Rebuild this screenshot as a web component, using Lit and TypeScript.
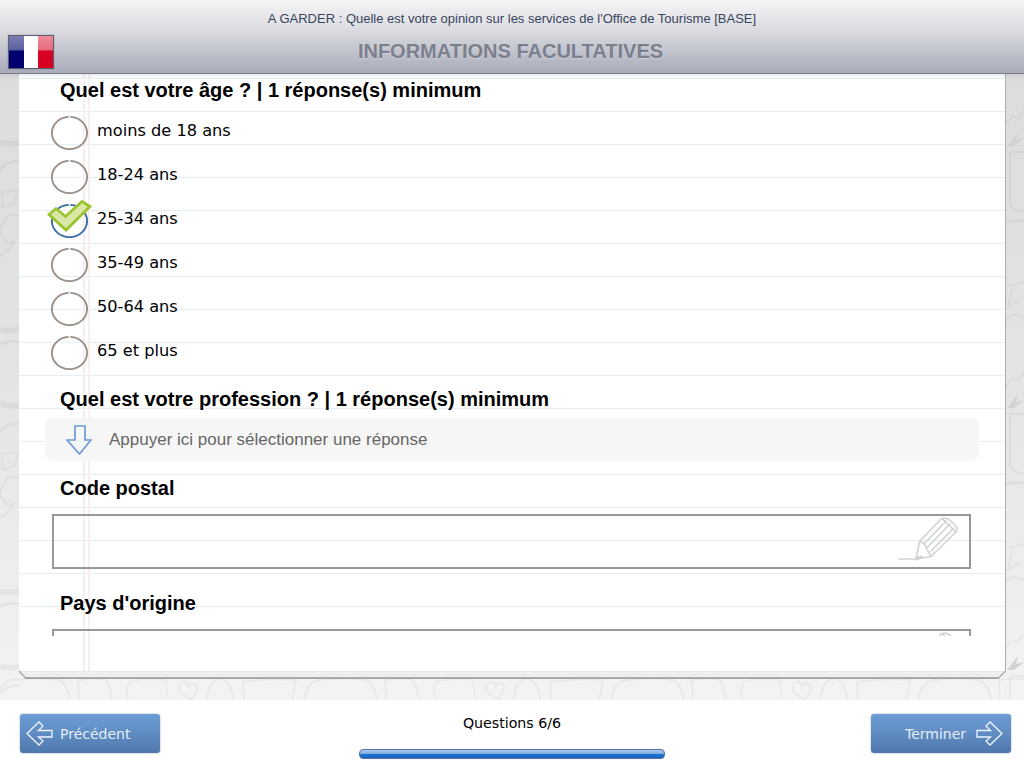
import { LitElement, html, css, svg } from "lit";
import { customElement } from "lit/decorators.js";

const OPTIONS = ["moins de 18 ans", "18-24 ans", "25-34 ans", "35-49 ans", "50-64 ans", "65 et plus"];
const CHECKED = 2;

const pencil = html`<svg class="pencil" width="62" height="46" viewBox="0 0 62 46" fill="none" stroke="#d2d2d2" stroke-width="1.600" stroke-linejoin="round" stroke-linecap="round">
  <path d="M1 42H17" />
  <path d="M18 42L21.500 24.500L42.500 2.500Q47 0 51 2.500L57.500 8.500Q60.500 12 58 15L33 39.500Z" />
  <path d="M21.500 24.500Q28 26 28.500 32Q31 35 33 39.500" />
  <path d="M18 42L23 40" stroke-width="3" />
  <path d="M26 27L48 4M29.500 30L52 7M33 34L56 11" />
  <path d="M44 1.500L58 15" />
</svg>`;

const bottomTile = (x: number) => svg`<g transform="translate(${x} 0)">
  <path d="M-3 626Q0 608 12 606Q40 603 60 606Q68 612 70 626" />
  <path d="M79 626L78 606Q95 603 106 606Q110 612 112 626" />
  <path d="M128 626Q125 612 131 607Q150 604 166 606L168 626" stroke-dasharray="3 1" />
  <path d="M180 618Q176 610 184 608Q188 608 188 612Q194 606 197 612Q197 620 190 626M180 618L190 626" />
  <path d="M207 626Q208 606 220 604Q232 608 233 626" />
  <path d="M242 608Q270 604 296 606L292 626M243 608L244 626" />
</g>`;

const leftBlock = (y: number) => svg`<g transform="translate(0 ${y})">
  <path d="M0 68Q10 71 19 69" stroke-width="6" />
  <path d="M19 87Q5 88 0 96" stroke-width="2.500" />
  <path d="M2 118L18 116L15 130L2 134Z" stroke-width="1.500" />
  <path d="M19 142Q6 138 4 148Q-4 158 4 164Q6 172 14 168Q10 176 0 182" stroke-width="2" />
  <path d="M0 256Q10 258 19 255" stroke-width="6" />
  <path d="M0 270Q10 266 19 268" stroke-width="3" />
</g>`;

const rightBlock = (y: number) => svg`<g transform="translate(0 ${y})">
  <path d="M1006 50L1012 42L1018 44L1024 36" />
  <path d="M1007 72L1018 58L1016 66L1024 64L1014 72Z" fill="#d2d2d2" stroke="none" />
  <path d="M1010 78H1024M1010 78V130Q1012 136 1024 138" stroke-width="2" />
  <path d="M1006 148Q1016 146 1024 147" stroke-width="3" />
  <path d="M1008 212L1024 208M1012 214L1008 234L1020 226" />
  <path d="M1006 246L1012 240L1024 244" />
</g>`;

@customElement("app-root")
export class AppRoot extends LitElement {
  static styles = css`
    :host {
      display: block;
      width: 1024px;
      height: 768px;
      overflow: hidden;
      background: #fff;
      font-family: "Liberation Sans", Arial, sans-serif;
    }
    .page {
      display: flex;
      flex-direction: column;
      height: 768px;
    }
    header {
      position: relative;
      z-index: 2;
      box-sizing: border-box;
      height: 74px;
      padding-top: 11px;
      text-align: center;
      background: linear-gradient(to bottom, #f5f5f7 0%, #dfe0e4 35%, #a8acba 100%);
      border-bottom: 1px solid #787b88;
      box-shadow: 0 2px 3px rgba(120, 125, 135, 0.18);
    }
    .survey {
      font-size: 13px;
      line-height: 16px;
      color: #39445f;
    }
    .section {
      margin-top: 13px;
      padding-right: 3px;
      font-size: 20px;
      line-height: 22px;
      font-weight: bold;
      color: #7b7f8e;
      text-shadow: 0 1px 1px rgba(255, 255, 255, 0.3);
    }
    .flag {
      position: absolute;
      left: 8px;
      top: 35px;
      box-sizing: border-box;
      width: 46px;
      height: 34px;
      display: flex;
      border: 1px solid #5c5f72;
      box-shadow: 0 0 1px rgba(0, 0, 0, 0.4);
    }
    .flag i {
      flex: 1;
      display: block;
    }
    .flag .b {
      background: linear-gradient(to bottom, #7c7fb4 0%, #5c5f9f 42%, #00006e 48%, #000070 100%);
    }
    .flag .w {
      background: #fff;
    }
    .flag .r {
      background: linear-gradient(to bottom, #ef8b98 0%, #e66d7d 42%, #d80027 48%, #d4001f 100%);
    }
    main {
      position: relative;
      flex: 1;
      overflow: hidden;
      padding-left: 19px;
      background: linear-gradient(to bottom, #dcdcdc 0%, #e4e4e4 50%, #f3f3f3 100%);
    }
    .doodles {
      position: absolute;
      inset: 0;
    }
    .corners {
      position: absolute;
      left: 0;
      top: 0;
    }
    .paper {
      position: relative;
      box-sizing: border-box;
      display: flex;
      flex-direction: column;
      width: 987px;
      height: 605px;
      border-right: 1px solid #adadad;
      border-bottom: 2px solid #a8a8a8;
      clip-path: polygon(0 0, 100% 0, 100% calc(100% - 8px), calc(100% - 8px) 100%, 7px 100%, 0 calc(100% - 8px));
      background-color: #fff;
      background-image:
        linear-gradient(to right, transparent 64px, #f6eef1 64px, #f6eef1 66px, transparent 66px, transparent 69px, #f6eef1 69px, #f6eef1 71px, transparent 71px),
        linear-gradient(to bottom, transparent 545px, #fff 560px),
        linear-gradient(#e2eff7 1px, transparent 1px);
      background-size: 100% 100%, 100% 100%, 100% 33px;
      background-position: 0 0, 0 0, 0 4px;
    }
    .content {
      height: 562px;
      overflow: hidden;
      box-sizing: border-box;
      padding-top: 5px;
    }
    h2 {
      margin: 0 0 0 41px;
      font-size: 20px;
      line-height: 22px;
      font-weight: bold;
      color: #000;
    }
    .options {
      margin-top: 7px;
      margin-bottom: 16px;
    }
    .option {
      display: flex;
      height: 44px;
      padding-left: 32px;
    }
    .radio {
      position: relative;
      width: 37px;
      height: 34px;
      margin-top: 8px;
      margin-right: 9px;
    }
    .radio svg {
      display: block;
    }
    .radio .check {
      position: absolute;
      left: -5px;
      top: -4px;
    }
    .option span {
      font-family: "DejaVu Sans", Verdana, sans-serif;
      font-size: 16.2px;
      line-height: 46px;
      color: #000;
    }
    .select {
      display: flex;
      align-items: center;
      box-sizing: border-box;
      height: 43px;
      margin: 8px 26px 16px 26px;
      padding-left: 21px;
      border-radius: 8px;
      background: #f6f6f6;
      font-size: 17px;
      color: #666;
    }
    .select svg {
      margin-right: 17px;
      flex: none;
    }
    .field {
      position: relative;
      box-sizing: border-box;
      height: 55px;
      margin: 15px 34px 23px 33px;
      border: 2px solid #989898;
    }
    .pencil {
      position: absolute;
      right: 9px;
      top: 1px;
    }
    .stack {
      margin-top: auto;
      height: 6px;
      box-sizing: border-box;
      background: linear-gradient(to bottom, #f2f2f2, #ececec 70%, #f7f7f7);
      border-top: 1px solid #e8e8e8;
    }
    footer {
      box-sizing: border-box;
      height: 68px;
      display: grid;
      grid-template-columns: 339px 306px 1fr;
      padding: 14px 13px 0 20px;
      background: #fff;
    }
    .btn {
      box-sizing: border-box;
      width: 140px;
      height: 39px;
      display: flex;
      align-items: center;
      border-radius: 3px;
      background: linear-gradient(to bottom, #6c9cd5 0%, #5f8cc3 50%, #4f78ac 100%);
      box-shadow: 0 0 2px rgba(60, 90, 130, 0.55);
      font-family: "DejaVu Sans", Verdana, sans-serif;
      font-size: 14px;
      color: #e4edf8;
    }
    .prev {
      padding-left: 6px;
      gap: 7px;
    }
    .next {
      justify-self: end;
      padding-left: 34px;
      gap: 10px;
    }
    .progress-area {
      display: flex;
      flex-direction: column;
      align-items: center;
    }
    .count {
      font-family: "DejaVu Sans", Verdana, sans-serif;
      font-size: 14.2px;
      line-height: 18px;
      color: #000;
    }
    .bar {
      box-sizing: border-box;
      width: 306px;
      height: 10px;
      margin-top: 17px;
      border-radius: 4px;
      border: 1px solid #5a6fa8;
      background: linear-gradient(to bottom, #a9c8ec 0%, #7fa9dc 50%, #1c6fd3 55%, #1a66c2 100%);
    }
  `;

  private ring(blue: boolean) {
    return html`<svg width="37" height="34" viewBox="0 0 37 34" fill="none">
      <ellipse cx="18.500" cy="17" rx="17.600" ry="16.100" stroke=${blue ? "#3a6fa9" : "#9b9087"} stroke-width="1.900"
        pathLength="100" stroke-dasharray="74.200 1.600 24.200" />
    </svg>`;
  }

  private check() {
    return html`<svg class="check" width="46" height="33" viewBox="0 0 46 33">
      <polygon points="3,14.500 10,8.500 19.500,16.500 36,1.500 44,6.500 20,30" fill="#d9e8a6" stroke="#9cc42e" stroke-width="2.800" stroke-linejoin="miter" />
    </svg>`;
  }

  private arrow(right: boolean) {
    return html`<svg width="27" height="25" viewBox="0 0 27 25" fill="none" stroke="#eef4fb" stroke-width="1.300" stroke-linejoin="miter"
      style=${right ? "transform:scaleX(-1)" : ""}>
      <path d="M1 12.500L13 1L17 5L12.500 9.500H26V16H12.500L17 20L13 24Z" />
    </svg>`;
  }

  render() {
    return html`<div class="page">
      <header>
        <div class="survey">A GARDER : Quelle est votre opinion sur les services de l'Office de Tourisme [BASE]</div>
        <div class="section">INFORMATIONS FACULTATIVES</div>
        <div class="flag"><i class="b"></i><i class="w"></i><i class="r"></i></div>
      </header>
      <main>
        <svg class="doodles" width="1024" height="626" viewBox="0 74 1024 626" fill="none" stroke="rgba(0,0,0,0.045)" stroke-width="1.800">
          <g transform="translate(0 74)">
            ${[0, 307, 614, 921].map((x) => bottomTile(x))}
          </g>
          ${[74, 336, 598].map((y) => leftBlock(y))}
          ${[74, 336, 598].map((y) => rightBlock(y))}
        </svg>
        <div class="paper">
          <div class="content">
            <h2>Quel est votre âge ? | 1 réponse(s) minimum</h2>
            <div class="options">
              ${OPTIONS.map(
                (o, i) => html`<div class="option">
                  <div class="radio">${this.ring(i === CHECKED)}${i === CHECKED ? this.check() : ""}</div>
                  <span>${o}</span>
                </div>`
              )}
            </div>
            <h2>Quel est votre profession ? | 1 réponse(s) minimum</h2>
            <div class="select">
              <svg width="26" height="30" viewBox="0 0 26 30" fill="none" stroke="#6b9bd8" stroke-width="1.700">
                <path d="M9 1H19V15H25L13.500 29L1 15H9Z" stroke-linejoin="miter" />
              </svg>
              Appuyer ici pour sélectionner une réponse
            </div>
            <h2>Code postal</h2>
            <div class="field">${pencil}</div>
            <h2>Pays d'origine</h2>
            <div class="field">${pencil}</div>
          </div>
          <div class="stack"></div>
        </div>
        <svg class="corners" width="1024" height="626" fill="none" stroke="#a8a8a8" stroke-width="1.300">
          <path d="M19 597L26 604.500" />
          <path d="M1005.500 597L998 604.500" />
        </svg>
      </main>
      <footer>
        <div class="btn prev">${this.arrow(false)}<span>Précédent</span></div>
        <div class="progress-area">
          <div class="count">Questions 6/6</div>
          <div class="bar"></div>
        </div>
        <div class="btn next"><span>Terminer</span>${this.arrow(true)}</div>
      </footer>
    </div>`;
  }
}
